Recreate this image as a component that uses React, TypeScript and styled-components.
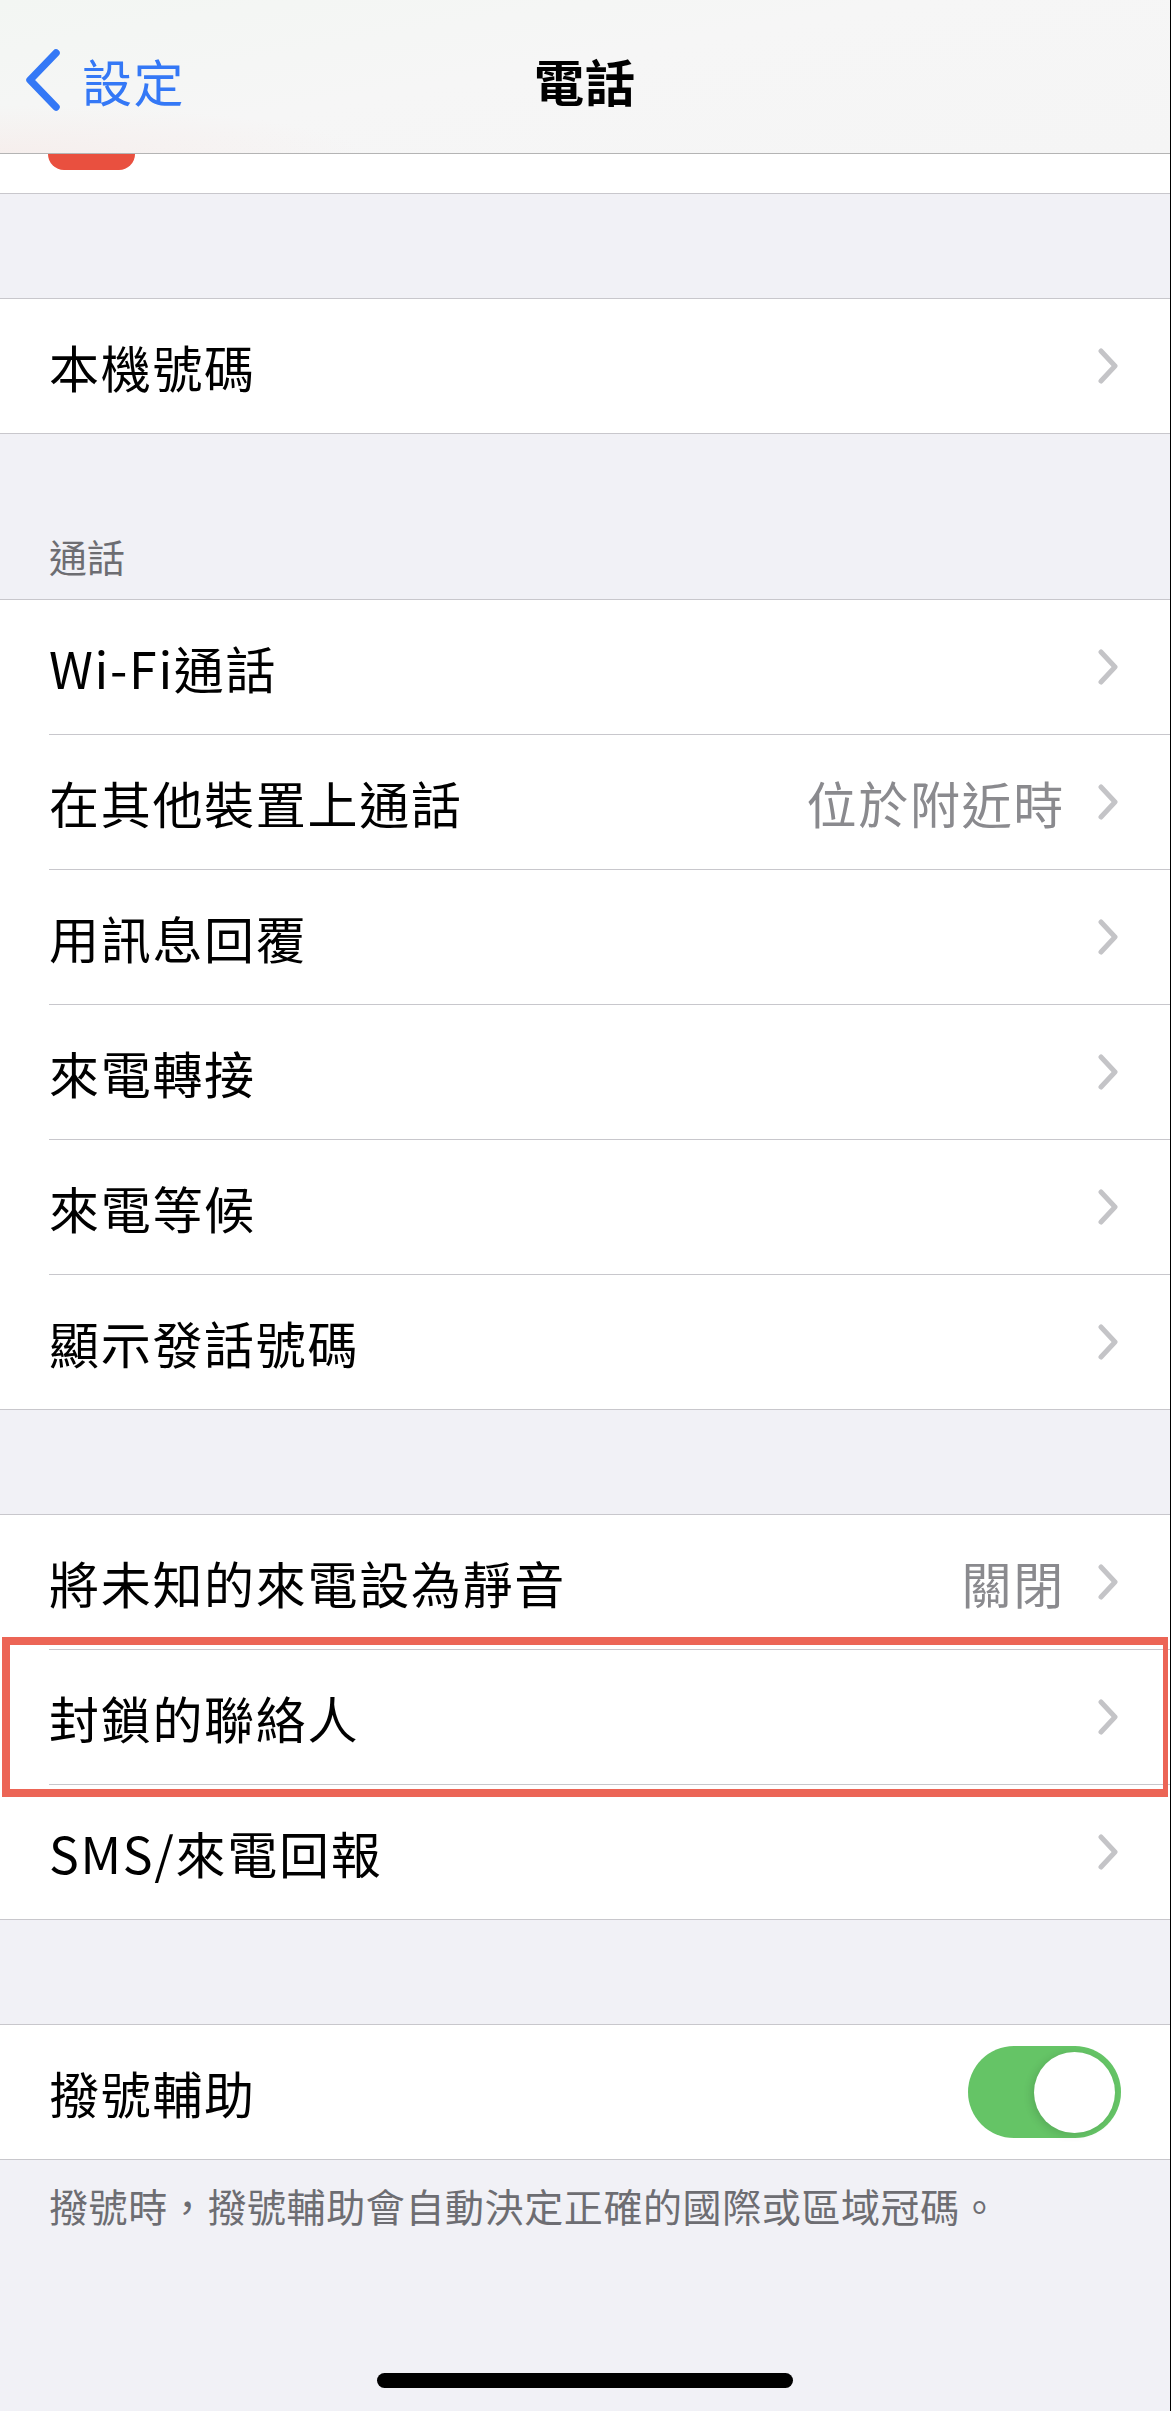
import styled, { createGlobalStyle } from "styled-components";

const GlobalStyle = createGlobalStyle`
    html, body {
        margin: 0;
        padding: 0;
        background: #F1F1F6;
    }
    * {
        box-sizing: border-box;
    }
`;

const Blue = "#3478F6";
const Gray = "#8A8A8E";
const Line = "#C8C7CC";

interface Item {
    label: string;
    value?: string;
    highlight?: boolean;
}

const callItems: Item[] = [
    { label: "Wi-Fi通話" },
    { label: "在其他裝置上通話", value: "位於附近時" },
    { label: "用訊息回覆" },
    { label: "來電轉接" },
    { label: "來電等候" },
    { label: "顯示發話號碼" },
];

const blockItems: Item[] = [
    { label: "將未知的來電設為靜音", value: "關閉" },
    { label: "封鎖的聯絡人", highlight: true },
    { label: "SMS/來電回報" },
];

function Chevron() {
    return (
        <ChevronIcon width="22" height="36" viewBox="0 0 22 36">
            <polyline points="4,3 18,18 4,33" fill="none" stroke="#C4C4C7" strokeWidth="5" strokeLinecap="round" strokeLinejoin="round" />
        </ChevronIcon>
    );
}

function LinkRow(props: { item: Item; first: boolean }) {
    const { item, first } = props;
    return (
        <Row highlight={item.highlight}>
            <RowInner first={first}>
                <Label>{item.label}</Label>
                {item.value && <Value>{item.value}</Value>}
                <Chevron />
            </RowInner>
        </Row>
    );
}

function Group(props: { items: Item[] }) {
    return (
        <GroupBox>
            {props.items.map((it, i) => (
                <LinkRow key={it.label} item={it} first={i === 0} />
            ))}
        </GroupBox>
    );
}

export default function App() {
    return (
        <Page>
            <GlobalStyle />
            <NavBar>
                <BackButton>
                    <svg width="38" height="62" viewBox="0 0 38 62">
                        <polyline points="32,4 6,31 32,58" fill="none" stroke={Blue} strokeWidth="7.5" strokeLinecap="round" strokeLinejoin="round" />
                    </svg>
                    <BackText>設定</BackText>
                </BackButton>
                <Title>電話</Title>
                <span />
            </NavBar>

            <TopPeek>
                <AppIcon />
            </TopPeek>

            <Gap />
            <Group items={[{ label: "本機號碼" }]} />

            <SectionHeader>通話</SectionHeader>
            <Group items={callItems} />

            <Gap />
            <Group items={blockItems} />

            <Gap />
            <GroupBox>
                <Row>
                    <RowInner first>
                        <Label>撥號輔助</Label>
                        <Toggle>
                            <Knob />
                        </Toggle>
                    </RowInner>
                </Row>
            </GroupBox>
            <Footer>撥號時，撥號輔助會自動決定正確的國際或區域冠碼。</Footer>

            <HomeIndicator />
        </Page>
    );
}

const Page = styled.div`
    width: 1171px;
    min-height: 2411px;
    display: flex;
    flex-direction: column;
    background: #F1F1F6;
    border-right: 1px solid #000;
    font-family: "Noto Sans CJK TC", "Noto Sans", sans-serif;
    color: #000;
`;

const NavBar = styled.div`
    height: 154px;
    display: grid;
    grid-template-columns: 1fr auto 1fr;
    align-items: center;
    padding-top: 6px;
    background:
        radial-gradient(ellipse at 0% 100%, rgba(245, 220, 215, 0.3), rgba(245, 220, 215, 0) 22%),
        linear-gradient(170deg, #F3F6F3 0%, #F6F6F6 45%, #F5F5F5 100%);
    border-bottom: 1px solid #B4B4B4;
`;

const BackButton = styled.div`
    display: flex;
    align-items: center;
    gap: 20px;
    padding-left: 24px;
`;

const BackText = styled.span`
    font-size: 50px;
    letter-spacing: 1.5px;
    color: ${Blue};
    line-height: 1;
`;

const Title = styled.div`
    font-size: 50px;
    font-weight: 700;
    letter-spacing: 1px;
    line-height: 1;
`;

const TopPeek = styled.div`
    height: 40px;
    background: #fff;
    border-bottom: 1px solid ${Line};
    padding-left: 48px;
`;

const AppIcon = styled.div`
    width: 87px;
    height: 16px;
    background: #E9503F;
    border-radius: 0 0 20px 20px;
`;

const Gap = styled.div`
    height: 104px;
`;

const SectionHeader = styled.div`
    height: 165px;
    display: flex;
    align-items: flex-end;
    padding: 0 49px 20px;
    font-size: 38px;
    line-height: 46px;
    color: #6D6D72;
`;

const GroupBox = styled.div`
    background: #fff;
    border-top: 1px solid ${Line};
    border-bottom: 1px solid ${Line};
`;

const Row = styled.div<{ highlight?: boolean }>`
    position: relative;
    padding-left: 49px;
    ${p =>
        p.highlight
            ? `&::after {
        content: "";
        position: absolute;
        top: -12px;
        bottom: -13px;
        left: 2px;
        right: 2px;
        border: 8px solid #EC6556;
        border-right-width: 5px;
        z-index: 2;
        pointer-events: none;
    }`
            : ""}
`;

const RowInner = styled.div<{ first?: boolean }>`
    height: ${p => (p.first ? 134 : 135)}px;
    display: flex;
    align-items: center;
    padding-right: 51px;
    border-top: ${p => (p.first ? "none" : `1px solid ${Line}`)};
`;

const Label = styled.span`
    flex: 1;
    font-size: 50px;
    letter-spacing: 1.7px;
    line-height: 1;
`;

const Value = styled.span`
    font-size: 50px;
    letter-spacing: 1.7px;
    line-height: 1;
    color: ${Gray};
    margin-right: 32px;
`;

const ChevronIcon = styled.svg`
    display: block;
    flex: none;
`;

const Toggle = styled.div`
    width: 153px;
    height: 92px;
    border-radius: 46px;
    background: #65C466;
    display: flex;
    align-items: center;
    justify-content: flex-end;
    padding-right: 6px;
    margin-right: -2px;
`;

const Knob = styled.div`
    width: 81px;
    height: 81px;
    border-radius: 50%;
    background: #fff;
    box-shadow: -3px 2px 8px rgba(0, 0, 0, 0.12);
`;

const Footer = styled.div`
    padding: 21px 49px 0;
    font-size: 39px;
    letter-spacing: 0.6px;
    line-height: 48px;
    color: #6D6D72;
`;

const HomeIndicator = styled.div`
    margin: auto auto 23px;
    width: 416px;
    height: 15px;
    border-radius: 8px;
    background: #000;
`;
